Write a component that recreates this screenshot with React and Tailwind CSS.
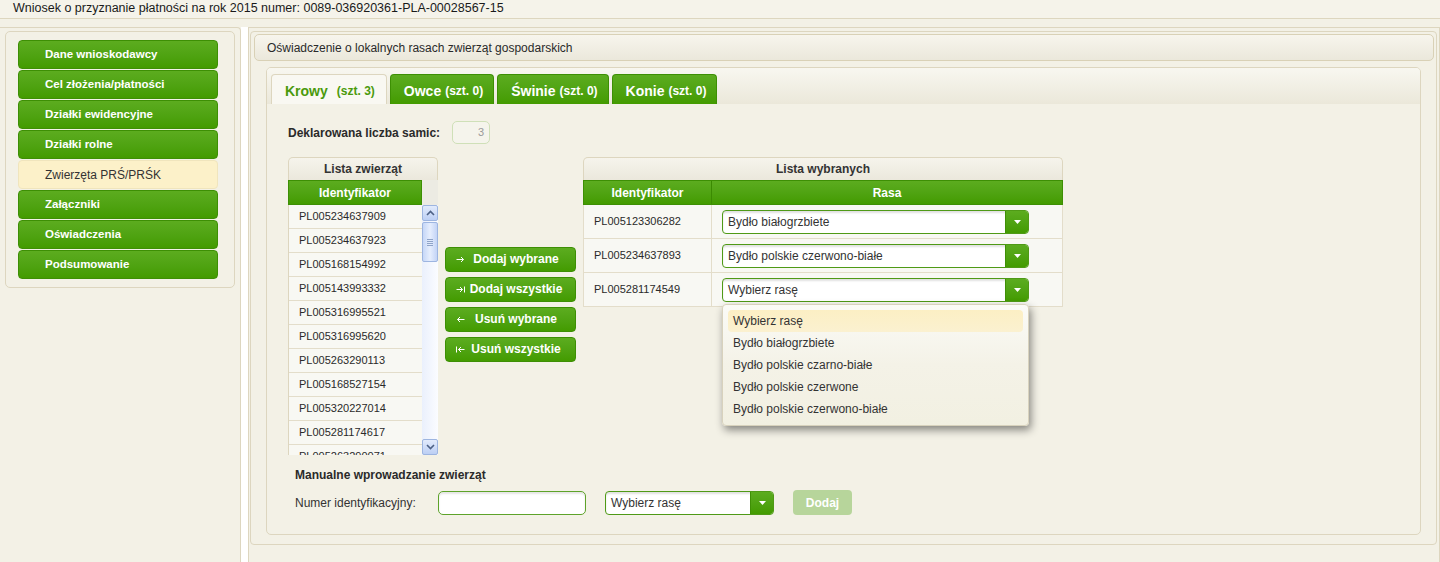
import React from "react";

const navItems = [
  ["Dane wnioskodawcy", false],
  ["Cel złożenia/płatności", false],
  ["Działki ewidencyjne", false],
  ["Działki rolne", false],
  ["Zwierzęta PRŚ/PRŚK", true],
  ["Załączniki", false],
  ["Oświadczenia", false],
  ["Podsumowanie", false],
];

const ids = [
  "PL005234637909",
  "PL005234637923",
  "PL005168154992",
  "PL005143993332",
  "PL005316995521",
  "PL005316995620",
  "PL005263290113",
  "PL005168527154",
  "PL005320227014",
  "PL005281174617",
  "PL005263290071",
];

const selected = [
  ["PL005123306282", "Bydło białogrzbiete"],
  ["PL005234637893", "Bydło polskie czerwono-białe"],
  ["PL005281174549", "Wybierz rasę"],
];

const options = [
  "Wybierz rasę",
  "Bydło białogrzbiete",
  "Bydło polskie czarno-białe",
  "Bydło polskie czerwone",
  "Bydło polskie czerwono-białe",
];

function Arrow({ kind }) {
  return (
    <svg width="9" height="7" viewBox="0 0 9 7" fill="none" stroke="#fff" strokeWidth="1">
      {kind === "r" && (
        <>
          <path d="M0.5 3.5H7.5" />
          <path d="M5 1L7.5 3.5L5 6" />
        </>
      )}
      {kind === "rr" && (
        <>
          <path d="M0.5 3.5H6.5" />
          <path d="M4 1L6.5 3.5L4 6" />
          <path d="M8.5 0.5V6.5" />
        </>
      )}
      {kind === "l" && (
        <>
          <path d="M1.5 3.5H8.5" />
          <path d="M4 1L1.5 3.5L4 6" />
        </>
      )}
      {kind === "ll" && (
        <>
          <path d="M0.5 0.5V6.5" />
          <path d="M2.5 3.5H8.5" />
          <path d="M5 1L2.5 3.5L5 6" />
        </>
      )}
    </svg>
  );
}

function Select({ value, w }) {
  return (
    <div className={`flex h-[24px] ${w} overflow-hidden rounded-[4px] border border-[#4f9a16] bg-white shadow-[inset_0_2px_2px_rgba(0,0,0,0.12)]`}>
      <div className="flex-1 truncate pl-[5px] text-[12px] leading-[22px] text-[#333]">{value}</div>
      <div className="flex w-[23px] items-center justify-center border-l border-[#3f8f06] bg-linear-to-b from-[#5cac1f] to-[#439b00]">
        <svg width="7" height="4" viewBox="0 0 7 4">
          <path d="M0 0H7L3.5 4Z" fill="#fff" />
        </svg>
      </div>
    </div>
  );
}

function ScrollBtn({ up }) {
  return (
    <div className="flex h-[16px] items-center justify-center rounded-[2px] border border-[#9db5e0] bg-linear-to-b from-[#e2ebfc] to-[#bccff4]">
      <svg width="9" height="6" viewBox="0 0 9 6" fill="none" stroke="#4d6185" strokeWidth="1.6">
        {up ? <path d="M1 5L4.5 1.5L8 5" /> : <path d="M1 1L4.5 4.5L8 1" />}
      </svg>
    </div>
  );
}

function GreenBtn({ icon, label }) {
  return (
    <div className="flex h-[25px] items-center rounded-[4px] border border-[#3d8f04] bg-linear-to-b from-[#5cac1f] to-[#439b00] pl-[10px] text-white">
      <Arrow kind={icon} />
      <div className="flex-1 pr-[8px] text-center text-[12px] font-bold leading-[23px]">{label}</div>
    </div>
  );
}

export default function App() {
  return (
    <div className="h-[562px] w-[1440px] overflow-hidden bg-[#f3f1e6] font-['Liberation_Sans',Arial,sans-serif] text-[#333]">
      {/* Title bar */}
      <div className="h-[19px] border-b border-[#ddd6bf] bg-[#f5f3ea] pl-[13px] text-[12.5px] leading-[17px] text-[#1a1a1a]">
        Wniosek o przyznanie płatności na rok 2015 numer: 0089-036920361-PLA-00028567-15
      </div>

      <div className="flex h-[543px] pt-[8px]">
        {/* Left column */}
        <div className="h-full w-[241px] rounded-tr-[4px] border-t border-r border-[#ddd6bf] px-[5px] pt-[3px]">
          <div className="flex h-[257px] w-[230px] flex-col gap-[1px] rounded-[5px] border border-[#ddd6bf] pt-[8px] pl-[12px]">
            {navItems.map(([label, active]) =>
              active ? (
                <div
                  key={label}
                  className="flex h-[29px] w-[200px] items-center rounded-[4px] border border-[#f0e5bd] bg-[#fcf1c9] pl-[26px] text-[12px] text-[#333]"
                >
                  {label}
                </div>
              ) : (
                <div
                  key={label}
                  className="flex h-[29px] w-[200px] items-center rounded-[4px] border border-[#3d8f04] bg-linear-to-b from-[#5cac1f] to-[#439b00] pl-[26px] text-[11.5px] font-bold text-white"
                >
                  {label}
                </div>
              )
            )}
          </div>
        </div>

        {/* White gap */}
        <div className="h-full w-[7px] bg-white" />

        {/* Right column */}
        <div className="h-full flex-1 border-t border-l border-r border-[#ddd6bf] pt-[3px] pl-[1px]">
          <div className="h-[514px] w-[1187px] rounded-[4px] border border-[#ddd6bf] bg-[#f3f1e6]">
            {/* Section header */}
            <div className="mt-[2px] ml-[3px] flex h-[27px] w-[1180px] items-center rounded-[5px] border border-[#d9d1b6] bg-linear-to-b from-[#f7f5ed] to-[#ebe8db] pl-[12px] text-[12px] text-[#2a2a2a]">
              Oświadczenie o lokalnych rasach zwierząt gospodarskich
            </div>

            {/* Tab box */}
            <div className="mt-[6px] ml-[15px] h-[468px] w-[1155px] rounded-[5px] border border-[#ddd6bf] bg-[#f3f1e6]">
              {/* Tab strip */}
              <div className="flex h-[36px] items-end gap-[3px] rounded-t-[4px] bg-linear-to-b from-[#f8f7f0] to-[#ebe8da] pl-[4px]">
                <div className="flex h-[30px] items-center rounded-t-[4px] border border-b-0 border-[#ddd6bf] bg-[#f9f8f2] pt-[3px] pr-[11px] pl-[13px]">
                  <span className="text-[14px] font-bold text-[#4a9a0c]">Krowy</span>
                  <span className="ml-[9px] text-[12px] font-bold text-[#4a9a0c]">(szt. 3)</span>
                </div>
                {[
                  ["Owce", "(szt. 0)"],
                  ["Świnie", "(szt. 0)"],
                  ["Konie", "(szt. 0)"],
                ].map(([a, b]) => (
                  <div
                    key={a}
                    className="flex h-[30px] items-center rounded-t-[4px] border border-b-0 border-[#3d8f04] bg-linear-to-b from-[#5cac1f] to-[#439b00] pt-[3px] pr-[10px] pl-[13px] text-white"
                  >
                    <span className="text-[14px] font-bold">{a}</span>
                    <span className="ml-[4px] text-[12px] font-bold">{b}</span>
                  </div>
                ))}
              </div>

              {/* Content */}
              <div className="pt-[17px] pl-[21px]">
                <div className="flex h-[23px] items-center">
                  <span className="text-[12px] font-bold text-[#2a2a2a]">Deklarowana liczba samic:</span>
                  <div className="ml-[12px] h-[23px] w-[38px] rounded-[5px] border border-[#cfe0b8] bg-[#f5f4ec] pr-[5px] text-right text-[11px] leading-[21px] text-[#9a9a9a]">
                    3
                  </div>
                </div>

                <div className="mt-[13px] flex items-start">
                  {/* Lista zwierząt */}
                  <div className="w-[150px]">
                    <div className="flex h-[23px] items-center justify-center rounded-t-[5px] border border-b-0 border-[#ddd6bf] bg-linear-to-b from-[#f6f4ec] to-[#ebe8dc] text-[12px] font-bold text-[#333]">
                      Lista zwierząt
                    </div>
                    <div className="flex">
                      <div className="w-[134px]">
                        <div className="flex h-[25px] items-center justify-center border border-[#3d8f04] bg-linear-to-b from-[#5cac1f] to-[#439b00] text-[12px] font-bold text-white">
                          Identyfikator
                        </div>
                        <div className="h-[250px] overflow-hidden border-l border-[#ddd6bf] bg-[#f8f8f3]">
                          {ids.map((id) => (
                            <div
                              key={id}
                              className="flex h-[24px] items-center border-b border-[#e3ddca] pl-[10px] text-[11px] text-[#2a2a2a]"
                            >
                              {id}
                            </div>
                          ))}
                        </div>
                      </div>
                      <div className="w-[16px]">
                        <div className="h-[25px] bg-[#ecebe3]" />
                        <div className="flex h-[250px] flex-col bg-linear-to-r from-[#eaf0fc] to-[#fbfcff]">
                          <ScrollBtn up />
                          <div className="mt-[1px] flex h-[40px] items-center justify-center rounded-[2px] border border-[#9db5e0] bg-linear-to-r from-[#c6d7f7] via-[#e6eefd] to-[#c3d4f6]">
                            <div className="flex flex-col gap-[1px]">
                              <div className="h-[1px] w-[6px] bg-[#8ea3c8]" />
                              <div className="h-[1px] w-[6px] bg-[#8ea3c8]" />
                              <div className="h-[1px] w-[6px] bg-[#8ea3c8]" />
                              <div className="h-[1px] w-[6px] bg-[#8ea3c8]" />
                            </div>
                          </div>
                          <div className="flex-1" />
                          <ScrollBtn />
                        </div>
                      </div>
                    </div>
                  </div>

                  {/* Buttons */}
                  <div className="ml-[7px] flex w-[131px] -translate-y-[2px] flex-col gap-[5px] self-center">
                    <GreenBtn icon="r" label="Dodaj wybrane" />
                    <GreenBtn icon="rr" label="Dodaj wszystkie" />
                    <GreenBtn icon="l" label="Usuń wybrane" />
                    <GreenBtn icon="ll" label="Usuń wszystkie" />
                  </div>

                  {/* Lista wybranych */}
                  <div className="ml-[7px] w-[480px]">
                    <div className="flex h-[23px] items-center justify-center rounded-t-[5px] border border-b-0 border-[#ddd6bf] bg-linear-to-b from-[#f6f4ec] to-[#ebe8dc] text-[12px] font-bold text-[#333]">
                      Lista wybranych
                    </div>
                    <div className="flex h-[25px] border border-[#3d8f04] bg-linear-to-b from-[#5cac1f] to-[#439b00] text-[12px] font-bold text-white">
                      <div className="flex w-[127px] items-center justify-center">Identyfikator</div>
                      <div className="flex flex-1 items-center justify-center border-l border-[#3b8a02]">Rasa</div>
                    </div>
                    {selected.map(([id, rasa], i) => (
                      <div
                        key={id}
                        className="flex h-[34px] border-r border-b border-l border-[#e3ddca] bg-[#f8f8f3]"
                      >
                        <div className="flex w-[127px] items-center pl-[10px] text-[11px] text-[#2a2a2a]">{id}</div>
                        <div className="relative flex-1 border-l border-[#e3ddca] pt-[5px] pl-[10px]">
                          <Select value={rasa} w="w-[307px]" />
                          {i === 2 && (
                            <div className="absolute top-[31px] left-[10px] z-10 w-[307px] rounded-[4px] border border-[#d8d2bd] bg-linear-to-b from-[#fbfbf7] via-[#f4f2e7] to-[#f2f0e2] p-[5px] shadow-[2px_4px_8px_rgba(0,0,0,0.45)]">
                              {options.map((o, k) => (
                                <div
                                  key={o}
                                  className={
                                    k === 0
                                      ? "flex h-[22px] items-center rounded-[4px] bg-linear-to-b from-[#fcefc4] to-[#fbf1d0] pl-[5px] text-[12px] text-[#333]"
                                      : "flex h-[22px] items-center pl-[5px] text-[12px] text-[#333]"
                                  }
                                >
                                  {o}
                                </div>
                              ))}
                            </div>
                          )}
                        </div>
                      </div>
                    ))}
                  </div>
                </div>

                {/* Manual entry */}
                <div className="mt-[13px] pl-[7px]">
                  <div className="text-[12px] leading-[14px] font-bold text-[#2a2a2a]">Manualne wprowadzanie zwierząt</div>
                  <div className="mt-[8px] flex items-center">
                    <div className="w-[143px] text-[12px] text-[#333]">Numer identyfikacyjny:</div>
                    <div className="h-[24px] w-[148px] rounded-[5px] border border-[#5ea32a] bg-white shadow-[inset_0_2px_2px_rgba(0,0,0,0.1)]" />
                    <div className="ml-[19px]">
                      <Select value="Wybierz rasę" w="w-[169px]" />
                    </div>
                    <div className="ml-[19px] flex h-[25px] w-[59px] items-center justify-center rounded-[4px] bg-[#b7d59b] text-[12px] font-bold text-white">
                      Dodaj
                    </div>
                  </div>
                </div>
              </div>
            </div>
          </div>
        </div>
      </div>
    </div>
  );
}
